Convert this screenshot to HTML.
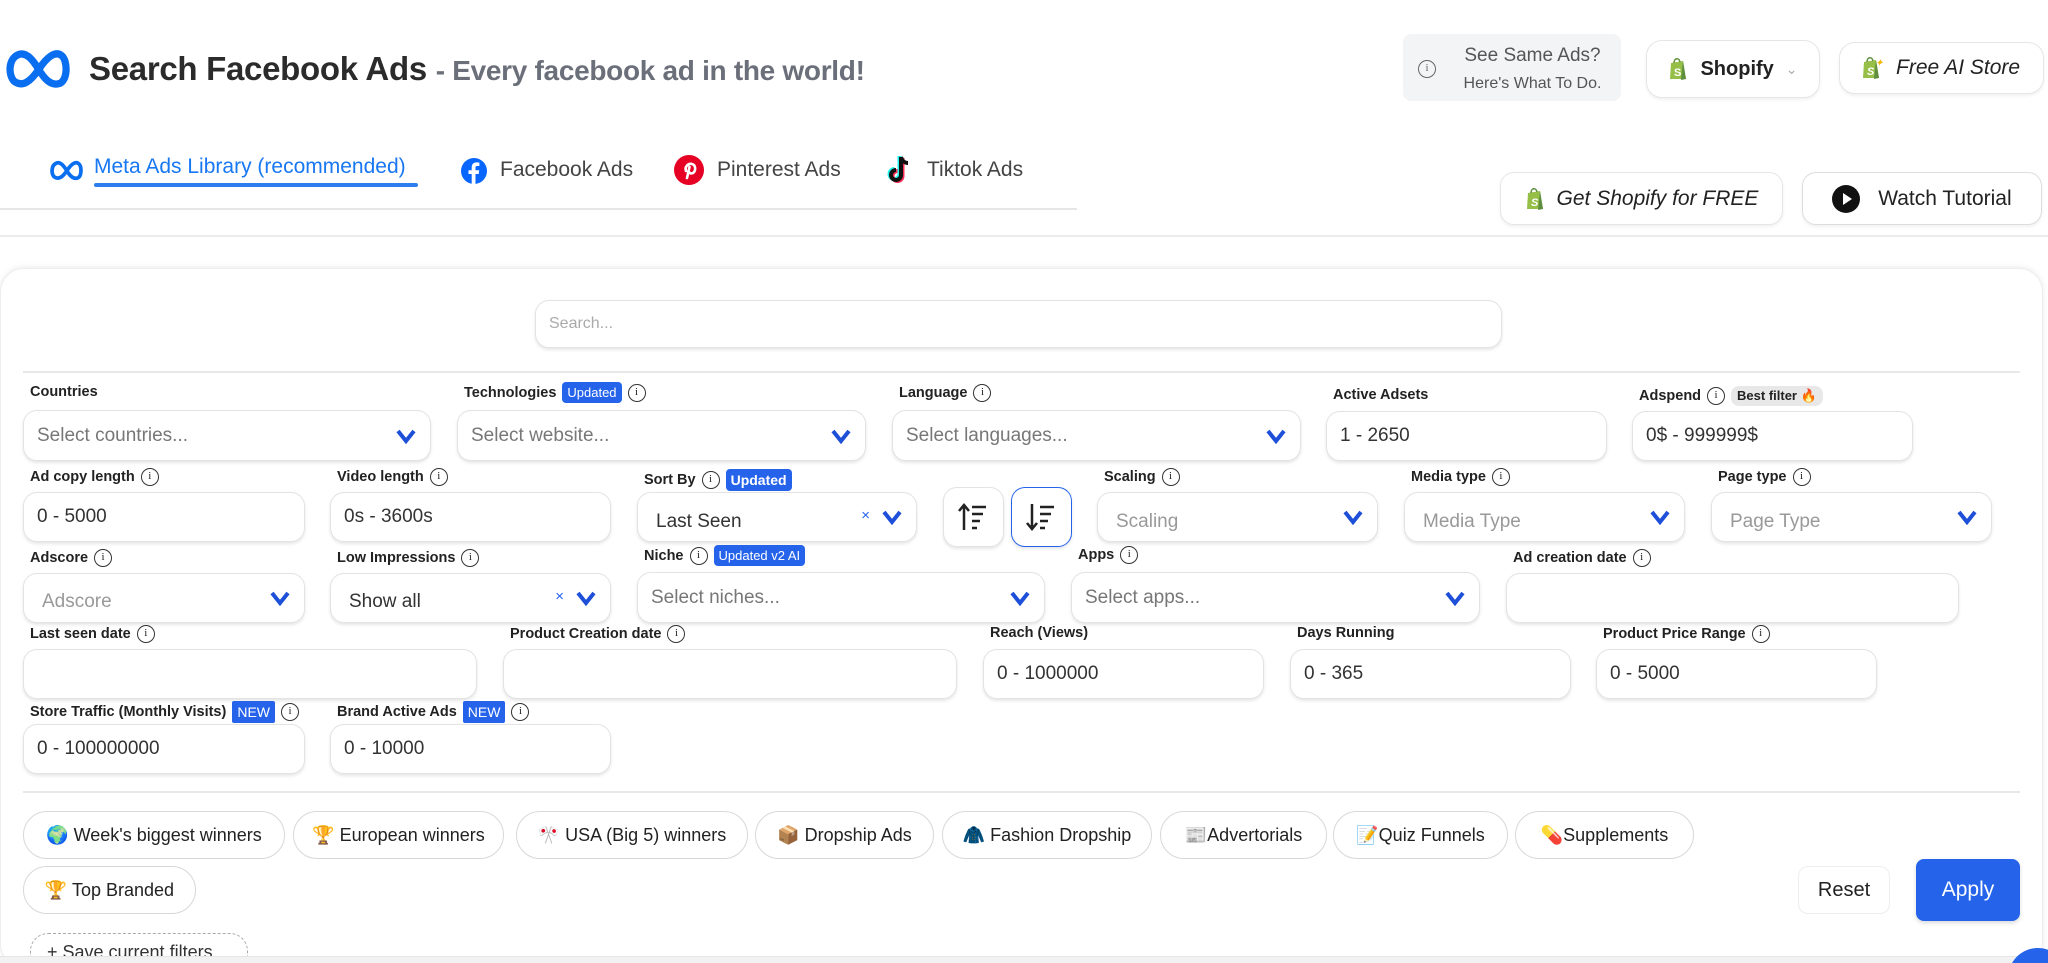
<!DOCTYPE html>
<html><head><meta charset="utf-8">
<style>
*{box-sizing:border-box;margin:0;padding:0}
html{width:2048px;height:963px;overflow:hidden}
body{width:2048px;height:963px;overflow:hidden;background:#fff;font-family:"Liberation Sans",Arial,sans-serif;color:#222;position:relative}
.a{position:absolute}
.inp{position:absolute;border:1px solid #e3e3e3;border-radius:14px;background:#fff;box-shadow:0 2px 3px rgba(0,0,0,.10);font-size:19px;color:#333;display:flex;align-items:center;padding-left:13px}
.ph{color:#777}
.ph2{color:#999}
.lbl{position:absolute;font-size:14.5px;font-weight:bold;color:#222;display:flex;align-items:center;gap:6px;white-space:nowrap}
.i{display:inline-block;width:18px;height:18px;border:1.5px solid #333;border-radius:50%;font-size:11px;font-weight:normal;text-align:center;line-height:15px;font-family:"Liberation Serif",serif}
.chev{position:absolute;right:14px;top:50%;margin-top:-8px}
.badge{background:#2563eb;color:#fff;font-size:13px;font-weight:normal;padding:3px 5px;border-radius:4px}
.chip{position:absolute;top:811px;height:48px;border:1.5px solid #d8d8d8;border-radius:24px;font-size:18px;display:flex;align-items:center;justify-content:center;gap:6px;color:#222;white-space:nowrap}
.btn{position:absolute;border:1.5px solid #e6e6e6;border-radius:14px;background:#fff;display:flex;align-items:center;justify-content:center;gap:12px;font-size:21px;box-shadow:0 2px 3px rgba(0,0,0,.06)}
.x{position:absolute;right:46px;top:50%;margin-top:-10px;color:#2563eb;font-size:15px}
</style></head><body>
<svg width="0" height="0" style="position:absolute"><defs>
<symbol id="cv" viewBox="0 0 20 16"><polyline points="2,3 10,13 18,3" fill="none" stroke="#1d4fd8" stroke-width="4" stroke-linejoin="miter"/></symbol>
<symbol id="meta" viewBox="0 0 64 42"><path d="M8 34 C2 28 2 12 12 8 C22 4 30 20 34 26 C40 35 46 38 52 36 C60 33 60 14 54 9 C48 4 40 10 32 22 C24 34 16 40 8 34Z" fill="none" stroke="#0a6ef0" stroke-width="7"/></symbol>
<symbol id="shop" viewBox="0 0 20 24"><path d="M3 6 L15 4 L18 22 L2 22 Z" fill="#95bf47"/><path d="M15 4 L18 22 L13 23 Z" fill="#5e8e3e"/><path d="M6 6 C6 1 11 0 12 5" fill="none" stroke="#5e8e3e" stroke-width="1.5"/><text x="6" y="19" font-size="11" fill="#fff" font-weight="bold" font-family="Liberation Sans">S</text></symbol>
</defs></svg>

<svg class="a" style="left:6px;top:46px" width="66" height="44"><use href="#meta"/></svg>
<div class="a" style="left:89px;top:50px;font-size:33px;font-weight:bold;color:#2b2b2b;white-space:nowrap;letter-spacing:-0.3px">Search Facebook Ads <span style="font-size:28px;color:#6b6f7a">- Every facebook ad in the world!</span></div>

<svg class="a" style="left:50px;top:158px" width="34" height="24"><use href="#meta"/></svg>
<div class="a" style="left:94px;top:155px;font-size:21px;color:#1877f2">Meta Ads Library (recommended)</div>
<div class="a" style="left:94px;top:183px;width:324px;height:4px;background:#2d7ff0;border-radius:2px"></div>
<svg class="a" style="left:460px;top:157px" width="28" height="28" viewBox="0 0 28 28"><circle cx="14" cy="14" r="13" fill="#0866ff"/><path d="M15.5 27V17h3.2l.5-3.8h-3.7v-2.4c0-1.1.3-1.8 1.9-1.8h2V5.6c-.3 0-1.5-.2-2.9-.2-2.9 0-4.8 1.7-4.8 5v2.8H8.5V17h3.2v10z" fill="#fff"/></svg>
<div class="a" style="left:500px;top:158px;font-size:21px;color:#444">Facebook Ads</div>
<svg class="a" style="left:673px;top:154px" width="32" height="32" viewBox="0 0 32 32"><circle cx="16" cy="16" r="15" fill="#e60023"/><path d="M14 24 L16.5 13 M13 17c-1.5-4 2-8 6-7 4 1 4 7 1 9-2 1-3.5 0-4-1" fill="none" stroke="#fff" stroke-width="2.6" stroke-linecap="round"/></svg>
<div class="a" style="left:717px;top:158px;font-size:21px;color:#444">Pinterest Ads</div>
<svg class="a" style="left:886px;top:154px" width="28" height="32" viewBox="0 0 28 32"><path d="M15 3v18a5 5 0 1 1-5-5" fill="none" stroke="#25f4ee" stroke-width="4" transform="translate(-1.5,-1)"/><path d="M15 3v18a5 5 0 1 1-5-5" fill="none" stroke="#fe2c55" stroke-width="4" transform="translate(1.5,1)"/><path d="M15 3v18a5 5 0 1 1-5-5 M15 3c1 4 4 6 7 6" fill="none" stroke="#111" stroke-width="4"/></svg>
<div class="a" style="left:927px;top:158px;font-size:21px;color:#444">Tiktok Ads</div>
<div class="a" style="left:0;top:208px;width:1077px;height:2px;background:#e6e6e6"></div>
<div class="a" style="left:0;top:235px;width:2048px;height:2px;background:#ececec"></div>

<div class="a" style="left:1403px;top:34px;width:218px;height:67px;background:#f3f4f6;border-radius:8px"></div>
<div class="a" style="left:1418px;top:58px"><span class="i" style="border-color:#666;color:#666">i</span></div>
<div class="a" style="left:1450px;top:42px;width:165px;text-align:center;color:#555;font-size:19px;line-height:27px">See Same Ads?<br><span style="font-size:16px">Here's What To Do.</span></div>
<div class="btn" style="left:1646px;top:40px;width:174px;height:58px;border-radius:16px;font-weight:bold;font-size:20px"><svg width="20" height="24"><use href="#shop"/></svg>Shopify <span style="color:#aaa;font-weight:normal;font-size:14px">&#8964;</span></div>
<div class="btn" style="left:1839px;top:42px;width:205px;height:52px;border-radius:16px;font-style:italic;font-size:21px;justify-content:flex-start;padding-left:18px"><svg width="26" height="24"><use href="#shop"/><text x="17" y="10" font-size="10" fill="#f5b400">✦</text></svg>Free AI Store</div>
<div class="btn" style="left:1500px;top:172px;width:283px;height:53px;font-style:italic"><svg width="20" height="26"><use href="#shop"/></svg>Get Shopify for FREE</div>
<div class="btn" style="left:1802px;top:172px;width:240px;height:53px;border-color:#ddd"><svg width="28" height="28"><circle cx="14" cy="14" r="14" fill="#111"/><path d="M11 8 L20 14 L11 20Z" fill="#fff"/></svg>&nbsp;Watch Tutorial</div>

<div class="a" style="left:0;top:268px;width:2043px;height:700px;border-radius:24px;background:#fff;box-shadow:0 -1px 6px rgba(0,0,0,.08);border:1px solid #eee"></div>
<div class="inp" style="left:535px;top:300px;width:967px;height:48px;font-size:16px;color:#aaa">Search...</div>
<div class="a" style="left:23px;top:371px;width:1997px;height:2px;background:#e8e8e8"></div>

<div class="lbl" style="left:30px;top:384px">Countries</div>
<div class="inp ph" style="left:23px;top:410px;width:408px;height:51px">Select countries...<svg class="chev" width="20" height="16"><use href="#cv"/></svg></div>
<div class="lbl" style="left:464px;top:382px">Technologies <span class="badge">Updated</span><span class="i">i</span></div>
<div class="inp ph" style="left:457px;top:410px;width:409px;height:51px">Select website...<svg class="chev" width="20" height="16"><use href="#cv"/></svg></div>
<div class="lbl" style="left:899px;top:384px">Language <span class="i">i</span></div>
<div class="inp ph" style="left:892px;top:410px;width:409px;height:51px">Select languages...<svg class="chev" width="20" height="16"><use href="#cv"/></svg></div>
<div class="lbl" style="left:1333px;top:387px">Active Adsets</div>
<div class="inp" style="left:1326px;top:411px;width:281px;height:50px">1 - 2650</div>
<div class="lbl" style="left:1639px;top:386px">Adspend <span class="i">i</span><span style="background:#e8e8e8;border-radius:8px;padding:2px 6px;font-size:13px">Best filter 🔥</span></div>
<div class="inp" style="left:1632px;top:411px;width:281px;height:50px">0$ - 999999$</div>

<div class="lbl" style="left:30px;top:468px">Ad copy length <span class="i">i</span></div>
<div class="inp" style="left:23px;top:492px;width:282px;height:50px">0 - 5000</div>
<div class="lbl" style="left:337px;top:468px">Video length <span class="i">i</span></div>
<div class="inp" style="left:330px;top:492px;width:281px;height:50px">0s - 3600s</div>
<div class="lbl" style="left:644px;top:469px">Sort By <span class="i">i</span><span class="badge" style="font-size:14px;font-weight:bold">Updated</span></div>
<div class="inp" style="left:637px;top:492px;width:280px;height:50px;padding-left:18px;padding-top:10px">Last Seen<span class="x">×</span><svg class="chev" width="20" height="16"><use href="#cv"/></svg></div>
<div class="inp" style="left:943px;top:487px;width:61px;height:60px;justify-content:center;padding:0"><svg width="34" height="30" viewBox="0 0 34 30"><path d="M7 28V4 M2 9l5-6 5 6" fill="none" stroke="#222" stroke-width="2.5"/><path d="M15 5h14M15 12h11M15 19h8M15 26h5" stroke="#222" stroke-width="2.5"/></svg></div>
<div class="inp" style="left:1011px;top:487px;width:61px;height:60px;justify-content:center;padding:0;border:1.5px solid #2563eb"><svg width="34" height="30" viewBox="0 0 34 30"><path d="M7 2v24 M2 21l5 6 5-6" fill="none" stroke="#222" stroke-width="2.5"/><path d="M15 5h14M15 12h11M15 19h8M15 26h5" stroke="#222" stroke-width="2.5"/></svg></div>
<div class="lbl" style="left:1104px;top:468px">Scaling <span class="i">i</span></div>
<div class="inp ph2" style="left:1097px;top:492px;width:281px;height:50px;padding-left:18px;padding-top:10px">Scaling<svg class="chev" width="20" height="16"><use href="#cv"/></svg></div>
<div class="lbl" style="left:1411px;top:468px">Media type <span class="i">i</span></div>
<div class="inp ph2" style="left:1404px;top:492px;width:281px;height:50px;padding-left:18px;padding-top:10px">Media Type<svg class="chev" width="20" height="16"><use href="#cv"/></svg></div>
<div class="lbl" style="left:1718px;top:468px">Page type <span class="i">i</span></div>
<div class="inp ph2" style="left:1711px;top:492px;width:281px;height:50px;padding-left:18px;padding-top:10px">Page Type<svg class="chev" width="20" height="16"><use href="#cv"/></svg></div>

<div class="lbl" style="left:30px;top:549px">Adscore <span class="i">i</span></div>
<div class="inp ph2" style="left:23px;top:573px;width:282px;height:50px;padding-left:18px;padding-top:8px">Adscore<svg class="chev" width="20" height="16"><use href="#cv"/></svg></div>
<div class="lbl" style="left:337px;top:549px">Low Impressions <span class="i">i</span></div>
<div class="inp" style="left:330px;top:573px;width:281px;height:50px;padding-left:18px;padding-top:8px">Show all<span class="x">×</span><svg class="chev" width="20" height="16"><use href="#cv"/></svg></div>
<div class="lbl" style="left:644px;top:545px">Niche <span class="i">i</span><span class="badge">Updated v2 AI</span></div>
<div class="inp ph" style="left:637px;top:572px;width:408px;height:51px">Select niches...<svg class="chev" width="20" height="16"><use href="#cv"/></svg></div>
<div class="lbl" style="left:1078px;top:546px">Apps <span class="i">i</span></div>
<div class="inp ph" style="left:1071px;top:572px;width:409px;height:51px">Select apps...<svg class="chev" width="20" height="16"><use href="#cv"/></svg></div>
<div class="lbl" style="left:1513px;top:549px">Ad creation date <span class="i">i</span></div>
<div class="inp" style="left:1506px;top:573px;width:453px;height:50px"></div>

<div class="lbl" style="left:30px;top:625px">Last seen date <span class="i">i</span></div>
<div class="inp" style="left:23px;top:649px;width:454px;height:50px"></div>
<div class="lbl" style="left:510px;top:625px">Product Creation date <span class="i">i</span></div>
<div class="inp" style="left:503px;top:649px;width:454px;height:50px"></div>
<div class="lbl" style="left:990px;top:625px">Reach (Views)</div>
<div class="inp" style="left:983px;top:649px;width:281px;height:50px">0 - 1000000</div>
<div class="lbl" style="left:1297px;top:625px">Days Running</div>
<div class="inp" style="left:1290px;top:649px;width:281px;height:50px">0 - 365</div>
<div class="lbl" style="left:1603px;top:625px">Product Price Range <span class="i">i</span></div>
<div class="inp" style="left:1596px;top:649px;width:281px;height:50px">0 - 5000</div>

<div class="lbl" style="left:30px;top:701px">Store Traffic (Monthly Visits) <span class="badge" style="border-radius:2px;font-size:14px">NEW</span><span class="i">i</span></div>
<div class="inp" style="left:23px;top:724px;width:282px;height:50px">0 - 100000000</div>
<div class="lbl" style="left:337px;top:701px">Brand Active Ads <span class="badge" style="border-radius:2px;font-size:14px">NEW</span><span class="i">i</span></div>
<div class="inp" style="left:330px;top:724px;width:281px;height:50px">0 - 10000</div>

<div class="a" style="left:23px;top:791px;width:1997px;height:2px;background:#e8e8e8"></div>

<div class="chip" style="left:23px;width:262px">🌍 Week's biggest winners</div>
<div class="chip" style="left:293px;width:211px">🏆 European winners</div>
<div class="chip" style="left:516px;width:232px">🎌 USA (Big 5) winners</div>
<div class="chip" style="left:755px;width:179px">📦 Dropship Ads</div>
<div class="chip" style="left:942px;width:210px">🧥 Fashion Dropship</div>
<div class="chip" style="left:1160px;width:167px">📰Advertorials</div>
<div class="chip" style="left:1333px;width:175px">📝Quiz Funnels</div>
<div class="chip" style="left:1515px;width:179px">💊Supplements</div>
<div class="chip" style="left:23px;top:866px;width:173px">🏆 Top Branded</div>

<div class="a" style="left:1798px;top:866px;width:92px;height:48px;border:1px solid #eee;border-radius:10px;display:flex;align-items:center;justify-content:center;font-size:20px">Reset</div>
<div class="a" style="left:1916px;top:859px;width:104px;height:62px;background:#2563eb;border-radius:8px;display:flex;align-items:center;justify-content:center;font-size:21px;color:#fff;box-shadow:0 2px 4px rgba(0,0,0,.15)">Apply</div>

<div class="a" style="left:30px;top:933px;width:218px;height:30px;overflow:hidden"><div style="width:218px;height:40px;border:1.5px dashed #aaa;border-radius:18px;font-size:18px;padding:8px 0 0 16px;color:#333">+ Save current filters</div></div>
<div class="a" style="left:0;top:956px;width:2048px;height:7px;background:#f2f2f2;border-top:1px solid #e5e5e5"></div>
<div class="a" style="left:2008px;top:948px;width:40px;height:15px;overflow:hidden"><div style="width:60px;height:60px;border-radius:50%;background:#2563eb"></div></div>
</body></html>
